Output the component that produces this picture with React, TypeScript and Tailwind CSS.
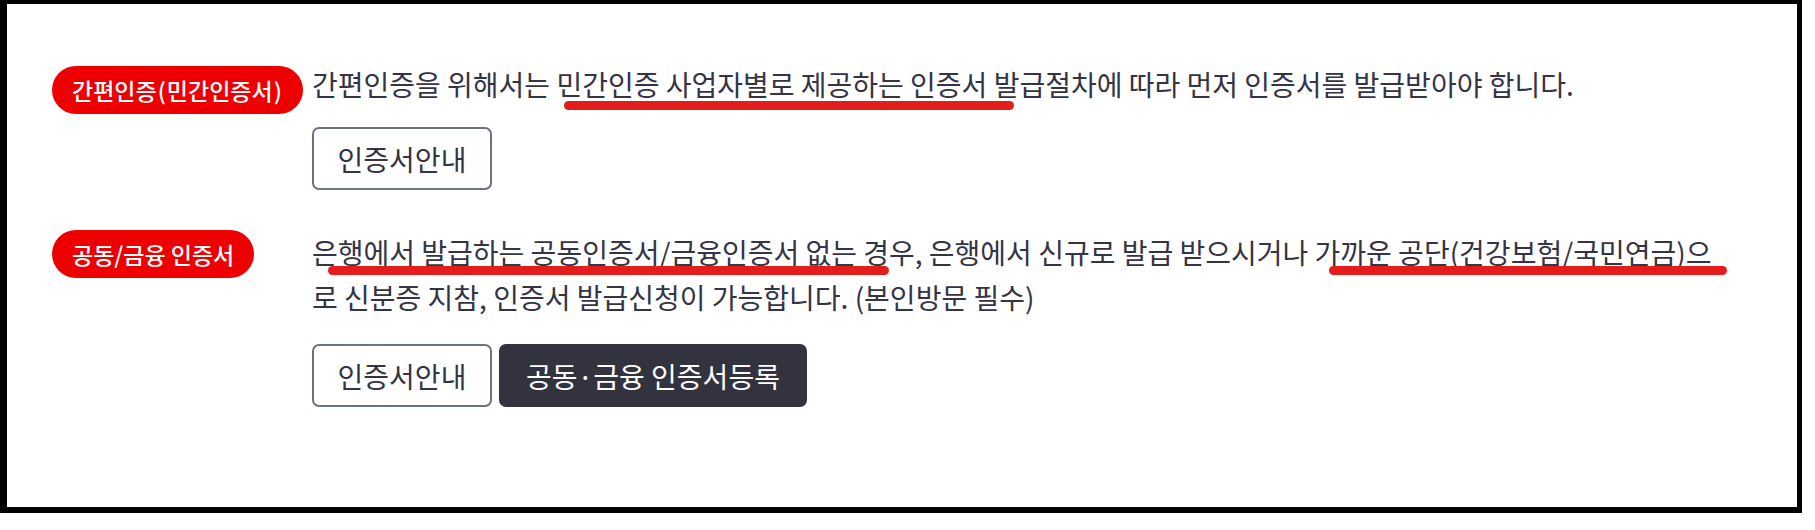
import React from "react";

const font = { fontFamily: '"Noto Sans CJK KR", "Noto Sans", sans-serif' };

function Badge({ children }: { children: React.ReactNode }) {
  return (
    <span className="inline-flex h-[48px] shrink-0 items-center whitespace-nowrap rounded-full bg-[#ee0000] px-[20px] text-[23px] font-medium leading-none text-white">
      <span>{children}</span>
    </span>
  );
}

// parentheses inside badges sit a little apart from the syllables
function Paren({ children }: { children: React.ReactNode }) {
  return <span className="px-[1px]">{children}</span>;
}

function OutlineButton({ children }: { children: React.ReactNode }) {
  return (
    <button className="h-[63px] w-[180px] rounded-[7px] border-2 border-[#6b7282] bg-white text-[28px] text-[#343444]">
      {children}
    </button>
  );
}

function DarkButton({ children }: { children: React.ReactNode }) {
  return (
    <button className="h-[63px] w-[308px] rounded-[7px] border-2 border-[#33333f] bg-[#33333f] text-[28px] text-white">
      {children}
    </button>
  );
}

// hand-drawn highlight stroke under a phrase
function Mark({ left, top, width }: { left: number; top: number; width: number }) {
  return (
    <span
      className="pointer-events-none absolute h-[9px] rounded-full bg-[#e31c1c]"
      style={{ left, top, width }}
    />
  );
}

export default function App() {
  return (
    <div className="h-[530px] w-[1815px] bg-white" style={font}>
      <div className="h-[513px] w-[1802px] border-t-4 border-r-[5px] border-b-[6px] border-l-[7px] border-black pt-[58px] pl-[45px] pr-[75px]">
        <div className="flex flex-col gap-[40px]">
          <div className="flex">
            <div className="w-[260px] shrink-0 pt-[4px]">
              <Badge>
                간편인증<Paren>(</Paren>민간인증서<Paren>)</Paren>
              </Badge>
            </div>
            <div className="min-w-0 flex-1">
              <p className="relative text-[28px] leading-[45px] text-[#343444]">
                간편인증을 위해서는 민간인증 사업자별로 제공하는 인증서 발급절차에 따라 먼저 인증서를 발급받아야 합니다.
                <Mark left={252} top={39} width={450} />
              </p>
              <div className="mt-[20px] flex gap-[7px]">
                <OutlineButton>인증서안내</OutlineButton>
              </div>
            </div>
          </div>

          <div className="flex">
            <div className="w-[260px] shrink-0">
              <Badge>공동/금융 인증서</Badge>
            </div>
            <div className="min-w-0 flex-1">
              <p className="relative text-[28px] leading-[45px] text-[#343444]">
                은행에서 발급하는 공동인증서/금융인증서 없는 경우, 은행에서 신규로 발급 받으시거나 가까운 공단(건강보험/국민연금)으로 신분증 지참, 인증서 발급신청이 가능합니다. (본인방문 필수)
                <Mark left={16} top={36} width={561} />
                <Mark left={1017} top={36} width={398} />
              </p>
              <div className="mt-[24px] flex gap-[7px]">
                <OutlineButton>인증서안내</OutlineButton>
                <DarkButton>공동·금융 인증서등록</DarkButton>
              </div>
            </div>
          </div>
        </div>
      </div>
    </div>
  );
}
